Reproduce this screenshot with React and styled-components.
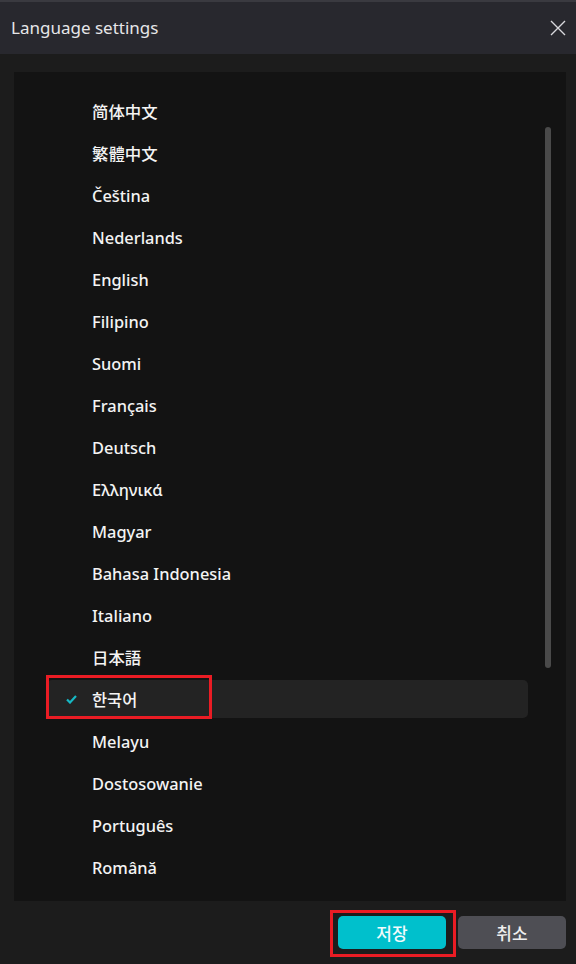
import styled, { createGlobalStyle } from "styled-components";

const GlobalStyle = createGlobalStyle`
  html, body {
    margin: 0;
    padding: 0;
    background: #1c1c1c;
  }
  body {
    font-family: "Noto Sans", "Noto Sans CJK KR", sans-serif;
  }
`;

const Dialog = styled.div`
  width: 576px;
  height: 964px;
  display: flex;
  flex-direction: column;
  background: #1c1c1c;
  border-top: 2px solid #3a3a40;
  box-sizing: border-box;
`;

const Header = styled.div`
  height: 52px;
  flex: none;
  display: flex;
  align-items: center;
  justify-content: space-between;
  padding: 0 8px 0 11px;
  background: #28282e;
`;

const Title = styled.div`
  color: #e6e6e8;
  font-size: 17px;
  font-weight: 400;
  padding-bottom: 2px;
`;

const CloseButton = styled.button`
  width: 20px;
  height: 20px;
  padding: 0;
  border: none;
  background: none;
  display: flex;
  align-items: center;
  justify-content: center;
  color: #d8d8dc;
`;

const Body = styled.div`
  flex: 1;
  display: flex;
  flex-direction: column;
  padding: 18px 10px 0 14px;
`;

const ListPanel = styled.div`
  position: relative;
  height: 829px;
  background: #131313;
  overflow: hidden;
`;

const List = styled.ul`
  list-style: none;
  margin: 0;
  padding: 20px 38px 0 33px;
  display: flex;
  flex-direction: column;
  gap: 4px;
`;

const Row = styled.li`
  position: relative;
  height: 38px;
  display: flex;
  align-items: center;
  padding-left: 45px;
  border-radius: 5px;
  background: ${(p) => (p.$selected ? "#232323" : "transparent")};
  color: #f4f4f4;
  font-size: 16.4px;
  font-weight: 500;
`;

const Check = styled.svg`
  position: absolute;
  left: 19px;
  top: 15px;
`;

const ScrollThumb = styled.div`
  position: absolute;
  left: 531px;
  top: 55px;
  width: 6px;
  height: 541px;
  border-radius: 3px;
  background: #4a4a4a;
`;

const Footer = styled.div`
  flex: 1;
  display: flex;
  justify-content: flex-end;
  align-items: center;
  gap: 12px;
`;

const Button = styled.button`
  width: 108px;
  height: 33px;
  border: none;
  border-radius: 5px;
  font-family: "Noto Sans CJK KR", "Noto Sans", sans-serif;
  font-size: 17px;
  font-weight: 500;
  color: ${(p) => (p.$primary ? "#f2fbfc" : "#eeeeee")};
  background: ${(p) => (p.$primary ? "#00c0cc" : "#4e4e54")};
`;

const Marked = styled.div`
  position: relative;
`;

const Highlight = styled.div`
  position: absolute;
  border: 3px solid #ea1c24;
  box-sizing: border-box;
  pointer-events: none;
  left: ${(p) => p.$left}px;
  top: ${(p) => p.$top}px;
  width: ${(p) => p.$width}px;
  height: ${(p) => p.$height}px;
`;

const languages = [
  "简体中文",
  "繁體中文",
  "Čeština",
  "Nederlands",
  "English",
  "Filipino",
  "Suomi",
  "Français",
  "Deutsch",
  "Ελληνικά",
  "Magyar",
  "Bahasa Indonesia",
  "Italiano",
  "日本語",
  "한국어",
  "Melayu",
  "Dostosowanie",
  "Português",
  "Română",
];

const selected = "한국어";

export default function App() {
  return (
    <>
      <GlobalStyle />
      <Dialog>
        <Header>
          <Title>Language settings</Title>
          <CloseButton>
            <svg width="16" height="16" viewBox="0 0 16 16">
              <path d="M1 1L15 15M15 1L1 15" stroke="currentColor" strokeWidth="1.4" />
            </svg>
          </CloseButton>
        </Header>
        <Body>
          <ListPanel>
            <List>
              {languages.map((lang) => (
                <Row key={lang} $selected={lang === selected}>
                  {lang === selected && (
                    <Check width="11" height="9" viewBox="0 0 11 9">
                      <path d="M1 4.5L4 7.5L10 1" fill="none" stroke="#16b8c4" strokeWidth="2.2" />
                    </Check>
                  )}
                  {lang}
                </Row>
              ))}
            </List>
            <ScrollThumb />
            <Highlight $left={32} $top={603} $width={166} $height={44} />
          </ListPanel>
          <Footer>
            <Marked>
              <Button $primary>저장</Button>
              <Highlight $left={-8} $top={-6} $width={126} $height={47} />
            </Marked>
            <Button>취소</Button>
          </Footer>
        </Body>
      </Dialog>
    </>
  );
}
